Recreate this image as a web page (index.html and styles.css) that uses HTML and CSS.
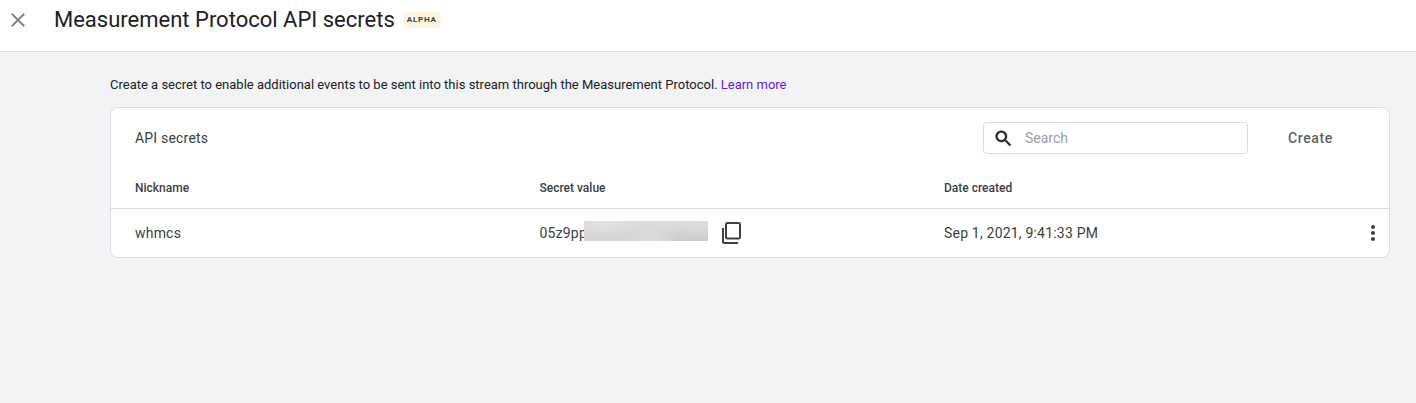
FILE: index.html
```html
<!DOCTYPE html>
<html lang="en">
<head>
<meta charset="utf-8">
<title>Measurement Protocol API secrets</title>
<link rel="stylesheet" href="styles.css">
</head>
<body>
<header class="topbar">
  <button class="close" aria-label="Close">
    <svg width="24" height="24" viewBox="0 0 24 24"><path fill="#80868b" d="M19 6.41 17.59 5 12 10.59 6.41 5 5 6.41 10.59 12 5 17.59 6.41 19 12 13.41 17.59 19 19 17.59 13.41 12z"/></svg>
  </button>
  <h1 class="title">Measurement Protocol API secrets</h1>
  <span class="badge">ALPHA</span>
</header>
<main class="content">
  <p class="intro">Create a secret to enable additional events to be sent into this stream through the Measurement Protocol. <a class="link" href="#">Learn more</a></p>
  <section class="card">
    <div class="card-head">
      <h2 class="card-title">API secrets</h2>
      <div class="search">
        <svg class="search-icon" viewBox="0 0 24 24"><path fill="#202124" stroke="#202124" stroke-width="0.5" d="M15.5 14h-.79l-.28-.27A6.47 6.47 0 0 0 16 9.5 6.5 6.5 0 1 0 9.5 16c1.610 0 3.090-.59 4.230-1.570l.27.28v.79l5 4.990L20.490 19l-4.990-5zm-6 0C7.010 14 5 11.990 5 9.500S7.010 5 9.500 5 14 7.010 14 9.500 11.990 14 9.500 14z"/></svg>
        <span class="search-text">Search</span>
      </div>
      <button class="create">Create</button>
    </div>
    <div class="row row-head">
      <div>Nickname</div>
      <div>Secret value</div>
      <div>Date created</div>
    </div>
    <div class="row row-body">
      <div>whmcs</div>
      <div class="secret">
        <span>05z9pp</span><span class="redacted"></span>
        <svg class="copy" width="24" height="26" viewBox="0 0 24 26"><rect x="6" y="3" width="14" height="15.500" rx="1.500" fill="none" stroke="#3c4043" stroke-width="2"/><path d="M3 8V21.500A1.500 1.500 0 0 0 4.500 23H18" fill="none" stroke="#3c4043" stroke-width="2"/></svg>
      </div>
      <div>Sep 1, 2021, 9:41:33 PM</div>
      <svg class="more" width="24" height="24" viewBox="0 0 24 24"><path fill="#3c4043" d="M12 8c1.100 0 2-.9 2-2s-.9-2-2-2-2 .9-2 2 .9 2 2 2zm0 2c-1.100 0-2 .9-2 2s.9 2 2 2 2-.9 2-2-.9-2-2-2zm0 6c-1.100 0-2 .9-2 2s.9 2 2 2 2-.9 2-2-.9-2-2-2z"/></svg>
    </div>
  </section>
</main>
</body>
</html>
```
FILE: styles.css
```css
* { box-sizing: border-box; }
html, body { height: 100%; }
body {
  margin: 0;
  background: #f1f3f4;
  font-family: Roboto, "Liberation Sans", sans-serif;
  color: #3c4043;
  overflow: hidden;
}
.topbar {
  height: 52px;
  background: #fff;
  border-bottom: 1px solid #dadce0;
  display: flex;
  align-items: flex-start;
  padding-left: 6px;
}
.close {
  width: 24px;
  height: 24px;
  margin-top: 8px;
  padding: 0;
  border: 0;
  background: none;
  display: block;
}
.title {
  margin: 6px 0 0 24px;
  font-size: 22px;
  line-height: 28px;
  font-weight: 400;
  color: #202124;
}
.badge {
  margin: 12px 0 0 8px;
  width: 38px;
  height: 16px;
  padding-left: 4px;
  background: #fef7e0;
  border-radius: 2px;
  font-size: 8px;
  line-height: 16px;
  font-weight: 700;
  letter-spacing: 0.8px;
  color: #3c4043;
}
.content { padding: 24px 26px 0 110px; }
.intro {
  margin: 0;
  font-size: 13px;
  line-height: 18px;
  color: #202124;
}
.link { color: #5f1fd0; text-decoration: none; }
.card {
  margin-top: 13px;
  height: 151px;
  background: #fff;
  border: 1px solid #dadce0;
  border-radius: 8px;
}
.card-head {
  height: 60px;
  display: flex;
  align-items: center;
  padding: 0 56px 0 24px;
}
.card-title {
  margin: 0 auto 0 0;
  font-size: 14px;
  font-weight: 400;
  letter-spacing: 0.2px;
  color: #3c4043;
}
.search {
  width: 265px;
  height: 32px;
  border: 1px solid #dadce0;
  border-radius: 4px;
  display: flex;
  align-items: center;
  padding-left: 9px;
  gap: 11px;
}
.search-icon { width: 21px; height: 21px; flex: none; }
.search-text { font-size: 14px; color: #9aa0a6; }
.create {
  margin-left: 40px;
  width: 45px;
  padding: 0;
  border: 0;
  background: none;
  font-family: inherit;
  font-size: 14px;
  font-weight: 500;
  letter-spacing: 0.6px;
  white-space: nowrap;
  color: #5f6368;
}
.row {
  display: grid;
  grid-template-columns: 404.5px 404.5px 1fr;
  padding-left: 24px;
  align-items: center;
  position: relative;
}
.row-head {
  height: 41px;
  font-size: 12px;
  font-weight: 500;
  color: #3c4043;
  border-bottom: 1px solid #dadce0;
}
.row-body {
  height: 48px;
  font-size: 14px;
  letter-spacing: 0.2px;
}
.secret { display: flex; align-items: center; }
.redacted {
  position: relative;
  width: 124px;
  height: 20px;
  margin: 0 0 4px -3px;
  overflow: hidden;
  background: #d6d6d6;
}
.redacted::before {
  content: "";
  position: absolute;
  inset: -6px;
  filter: blur(4px);
  background:
    radial-gradient(ellipse 26px 9px at 28px 10px, #e6e6e6, transparent),
    radial-gradient(ellipse 30px 10px at 72px 26px, #e0e0e0, transparent),
    radial-gradient(ellipse 22px 8px at 100px 24px, #c6c6c6, transparent),
    radial-gradient(ellipse 24px 8px at 125px 26px, #c4c4c4, transparent),
    linear-gradient(180deg, #e2e2e2, #cecece);
}
.copy { margin-left: 12px; flex: none; }
.more { position: absolute; right: 4px; top: 12px; }
```
